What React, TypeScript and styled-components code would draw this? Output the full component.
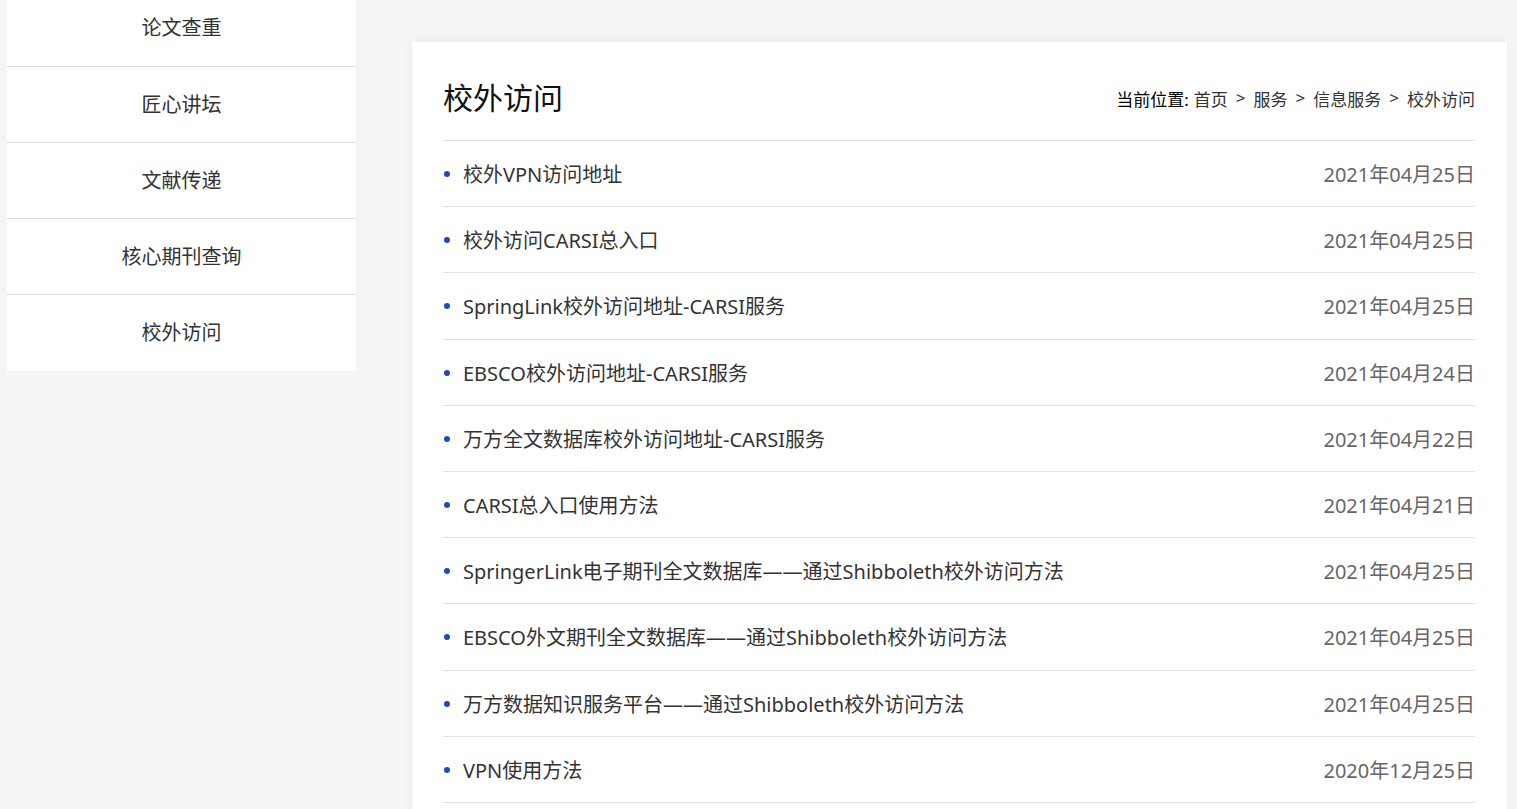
import styled, { createGlobalStyle } from 'styled-components'

const GlobalStyle = createGlobalStyle`
  html, body {
    margin: 0;
    padding: 0;
    background: #f5f5f5;
    font-family: "Noto Sans", "Noto Sans CJK SC", sans-serif;
    overflow: hidden;
  }
`

const Page = styled.div`
  display: flex;
  align-items: flex-start;
  gap: 56px;
  padding-left: 7px;
  width: 1517px;
  height: 809px;
  box-sizing: border-box;
`

const Sidebar = styled.ul`
  list-style: none;
  margin: -9px 0 0;
  padding: 0;
  width: 349px;
  background: #fff;
  flex-shrink: 0;
`

const SideItem = styled.li`
  height: 76px;
  line-height: 76px;
  text-align: center;
  font-size: 20px;
  color: #333;
  border-bottom: 1px solid #e0e0e0;
  box-sizing: border-box;

  &:first-child {
    height: 76px;
    line-height: 74px;
  }

  &:last-child {
    border-bottom: none;
  }
`

const Card = styled.div`
  margin-top: 42px;
  width: 1095px;
  min-height: 800px;
  background: #fff;
  box-shadow: 0 0 10px rgba(0, 0, 0, 0.06);
  padding: 0 32px 0 31px;
  box-sizing: border-box;
  flex-shrink: 0;
`

const Header = styled.div`
  display: flex;
  justify-content: space-between;
  align-items: center;
  padding: 36px 0 22px;
  border-bottom: 1px solid #e0e0e0;
`

const Title = styled.h2`
  margin: 0;
  font-size: 30px;
  font-weight: 400;
  line-height: 40px;
  color: #111;
`

const Crumbs = styled.div`
  font-size: 17px;
  color: #333;
  display: flex;
  gap: 8px;
`

const CrumbLabel = styled.span`
  color: #000;
  margin-right: -3px;
`

const List = styled.ul`
  list-style: none;
  margin: 0;
  padding: 0;
`

const Row = styled.li`
  display: flex;
  align-items: center;
  justify-content: space-between;
  height: 66.2px;
  border-bottom: 1px solid #e3e3e3;
  box-sizing: border-box;
  font-size: 20px;
`

const Name = styled.span`
  display: flex;
  align-items: center;
  color: #333;

  &::before {
    content: '';
    width: 6px;
    height: 6px;
    border-radius: 50%;
    background: #2546c4;
    margin: 1px 13px 0 1px;
  }
`

const DateText = styled.span`
  color: #666;
`

const sideItems = ['论文查重', '匠心讲坛', '文献传递', '核心期刊查询', '校外访问']

const items: [string, string][] = [
  ['校外VPN访问地址', '2021年04月25日'],
  ['校外访问CARSI总入口', '2021年04月25日'],
  ['SpringLink校外访问地址-CARSI服务', '2021年04月25日'],
  ['EBSCO校外访问地址-CARSI服务', '2021年04月24日'],
  ['万方全文数据库校外访问地址-CARSI服务', '2021年04月22日'],
  ['CARSI总入口使用方法', '2021年04月21日'],
  ['SpringerLink电子期刊全文数据库——通过Shibboleth校外访问方法', '2021年04月25日'],
  ['EBSCO外文期刊全文数据库——通过Shibboleth校外访问方法', '2021年04月25日'],
  ['万方数据知识服务平台——通过Shibboleth校外访问方法', '2021年04月25日'],
  ['VPN使用方法', '2020年12月25日'],
]

export default function App() {
  return (
    <>
      <GlobalStyle />
      <Page>
        <Sidebar>
          {sideItems.map((s) => (
            <SideItem key={s}>{s}</SideItem>
          ))}
        </Sidebar>
        <Card>
          <Header>
            <Title>校外访问</Title>
            <Crumbs>
              <CrumbLabel>当前位置:</CrumbLabel>
              <span>首页</span>
              <span>&gt;</span>
              <span>服务</span>
              <span>&gt;</span>
              <span>信息服务</span>
              <span>&gt;</span>
              <span>校外访问</span>
            </Crumbs>
          </Header>
          <List>
            {items.map(([name, date], i) => (
              <Row key={i}>
                <Name>{name}</Name>
                <DateText>{date}</DateText>
              </Row>
            ))}
          </List>
        </Card>
      </Page>
    </>
  )
}
